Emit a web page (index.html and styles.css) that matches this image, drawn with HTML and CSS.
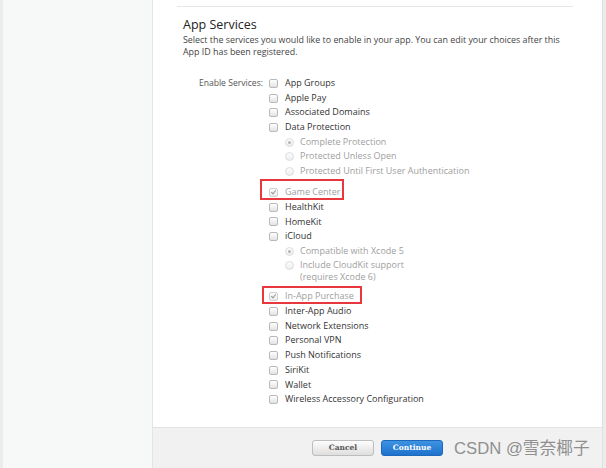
FILE: index.html
```html
<!DOCTYPE html>
<html>
<head>
<meta charset="utf-8">
<link rel="stylesheet" href="styles.css">
</head>
<body>
<div class="page">
  <div class="edge-left"></div>
  <aside class="sidebar"></aside>
  <main class="main">
    <section class="content">
      <div class="rule"></div>
      <h2 class="title">App Services</h2>
      <p class="desc">Select the services you would like to enable in your app. You can edit your choices after this App ID has been registered.</p>
      <div class="form">
        <div class="label">Enable Services:</div>
        <div class="options">
          <div class="opt"><span class="cb"></span>App Groups</div>
          <div class="opt"><span class="cb"></span>Apple Pay</div>
          <div class="opt"><span class="cb"></span>Associated Domains</div>
          <div class="opt"><span class="cb"></span>Data Protection</div>
          <div class="sub dis"><span class="rb on"></span>Complete Protection</div>
          <div class="sub dis"><span class="rb"></span>Protected Unless Open</div>
          <div class="sub dis"><span class="rb"></span>Protected Until First User Authentication</div>
          <div class="opt dis hl hl-gc"><span class="cb checked"></span>Game Center</div>
          <div class="opt"><span class="cb"></span>HealthKit</div>
          <div class="opt"><span class="cb"></span>HomeKit</div>
          <div class="opt"><span class="cb"></span>iCloud</div>
          <div class="sub dis"><span class="rb on"></span>Compatible with Xcode 5</div>
          <div class="sub dis multi"><span class="rb"></span><span>Include CloudKit support<br>(requires Xcode 6)</span></div>
          <div class="opt dis hl hl-iap"><span class="cb checked"></span>In-App Purchase</div>
          <div class="opt"><span class="cb"></span>Inter-App Audio</div>
          <div class="opt"><span class="cb"></span>Network Extensions</div>
          <div class="opt"><span class="cb"></span>Personal VPN</div>
          <div class="opt"><span class="cb"></span>Push Notifications</div>
          <div class="opt"><span class="cb"></span>SiriKit</div>
          <div class="opt"><span class="cb"></span>Wallet</div>
          <div class="opt"><span class="cb"></span>Wireless Accessory Configuration</div>
        </div>
      </div>
    </section>
    <footer class="footer">
      <button class="btn btn-cancel">Cancel</button>
      <button class="btn btn-continue">Continue</button>
      <span class="watermark">CSDN @雪奈椰子</span>
    </footer>
  </main>
  <div class="edge-right"></div>
</div>
</body>
</html>
```
FILE: styles.css
```css
* { box-sizing: border-box; }
html, body { margin: 0; padding: 0; }
body {
  width: 606px;
  height: 468px;
  overflow: hidden;
  background: #fff;
  font-family: "Open Sans", "DejaVu Sans", sans-serif;
  color: #333;
}
.page {
  display: flex;
  height: 468px;
}
.edge-left {
  width: 3px;
  background: #ececec;
}
.sidebar {
  width: 150px;
  background: #f7f8f8;
  border-right: 1px solid #e4e4e4;
}
.main {
  flex: 1;
  display: flex;
  flex-direction: column;
  background: #fff;
}
.edge-right {
  width: 4px;
  background: #ececec;
  border-left: 1px solid #e0e0e0;
}
.content {
  flex: 1;
  padding: 6px 0 0 30px;
}
.rule {
  height: 1px;
  background: #e6e6e6;
  margin-left: -6px;
  width: 396px;
}
.title {
  margin: 10px 0 0;
  font-size: 12.5px;
  font-weight: normal;
  color: #222;
  line-height: 16px;
}
.desc {
  margin: 1px 0 0;
  width: 382px;
  font-size: 8.9px;
  line-height: 12px;
  color: #444;
}
.form {
  display: grid;
  grid-template-columns: 80px auto;
  column-gap: 6px;
  margin-top: 18px;
  font-size: 9px;
  line-height: 14.7px;
}
.label {
  text-align: right;
  color: #555;
  font-size: 8.6px;
}
.options {
  display: flex;
  flex-direction: column;
  align-items: flex-start;
}
.opt, .sub {
  display: flex;
  align-items: center;
  height: 14.7px;
  white-space: nowrap;
}
.sub { padding-left: 16px; }
.sub.multi {
  height: auto;
  align-items: flex-start;
  line-height: 12px;
  padding-top: 0.5px;
  padding-bottom: 3px;
}
.sub.multi .rb { margin-top: 1.5px; }
.dis { color: #a0a0a0; }
.cb {
  width: 9px;
  height: 9px;
  margin-right: 7px;
  border: 1px solid #b9b9b9;
  border-radius: 2px;
  background: linear-gradient(#ffffff, #e2e2e2);
  position: relative;
  flex: none;
}
.cb.checked {
  border-color: #d0d0d0;
  background: linear-gradient(#fafafa, #ececec);
}
.cb.checked::after {
  content: "";
  position: absolute;
  left: 2px;
  top: 0px;
  width: 2px;
  height: 4px;
  border: solid #9a9a9a;
  border-width: 0 1.5px 1.5px 0;
  transform: rotate(40deg);
}
.rb {
  width: 9px;
  height: 9px;
  margin-right: 6px;
  border: 1px solid #dcdcdc;
  border-radius: 50%;
  background: linear-gradient(#fdfdfd, #eeeeee);
  position: relative;
  flex: none;
}
.rb.on::after {
  content: "";
  position: absolute;
  left: 2px;
  top: 2px;
  width: 3px;
  height: 3px;
  border-radius: 50%;
  background: #b5b5b5;
}
.hl {
  border: 2px solid #e8383d;
}
.hl-gc {
  margin-left: -9px;
  padding-left: 7px;
  padding-top: 6px;
  width: 84px;
  height: 21px;
}
.hl-iap {
  margin-left: -7px;
  padding-left: 5px;
  padding-top: 2.7px;
  width: 100px;
  height: 18px;
}
.footer {
  height: 41px;
  flex: none;
  background: #f1f1f1;
  border-top: 1px solid #e2e2e2;
  display: flex;
  align-items: flex-start;
  padding: 12px 0 0 158px;
}
.btn {
  height: 16px;
  width: 62px;
  margin: 0;
  padding: 0;
  border-radius: 3px;
  font-family: "DejaVu Serif", "Liberation Serif", serif;
  font-weight: bold;
  font-size: 7.5px;
  line-height: 14px;
}
.btn-cancel {
  margin-left: 1px;
  border: 1px solid #bdbdbd;
  background: linear-gradient(#fdfdfd, #dedede);
  color: #555;
}
.btn-continue {
  margin-left: 7px;
  width: 62px;
  border: 1px solid #1c68bd;
  background: linear-gradient(#3d92e2, #1f72cc);
  color: #fff;
}
.watermark {
  margin-left: 11px;
  margin-top: -2px;
  font-family: "Liberation Sans", "Noto Sans CJK SC", sans-serif;
  font-size: 16.7px;
  line-height: 21px;
  color: #8f8f8f;
  white-space: nowrap;
}
```
